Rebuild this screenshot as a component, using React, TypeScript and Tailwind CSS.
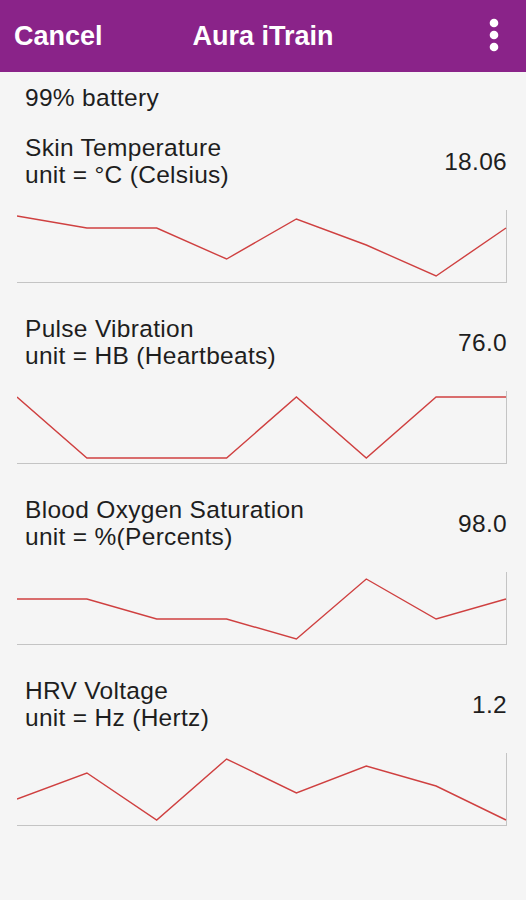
type Metric = {
  title: string;
  unit: string;
  value: string;
  points: number[];
};

const metrics: Metric[] = [
  {
    title: "Skin Temperature",
    unit: "unit = °C (Celsius)",
    value: "18.06",
    points: [6, 18, 18, 49, 9, 35, 66, 18],
  },
  {
    title: "Pulse Vibration",
    unit: "unit = HB (Heartbeats)",
    value: "76.0",
    points: [6, 67, 67, 67, 6, 67, 6, 6],
  },
  {
    title: "Blood Oxygen Saturation",
    unit: "unit = %(Percents)",
    value: "98.0",
    points: [27, 27, 47, 47, 67, 7, 47, 27],
  },
  {
    title: "HRV Voltage",
    unit: "unit = Hz (Hertz)",
    value: "1.2",
    points: [46, 20, 67, 6, 40, 13, 33, 67],
  },
];

const Chart = ({ points }: { points: number[] }) => {
  const step = 489 / (points.length - 1);
  const d = points.map((y, i) => `${(i * step).toFixed(1)},${y}`).join(" ");
  return (
    <svg width="490" height="73" viewBox="0 0 490 73" className="block">
      <line x1="489.5" y1="0" x2="489.5" y2="73" stroke="#c4c4c4" strokeWidth="1" />
      <line x1="0" y1="72.5" x2="490" y2="72.5" stroke="#c4c4c4" strokeWidth="1" />
      <polyline points={d} fill="none" stroke="#cf4040" strokeWidth="1.4" strokeLinejoin="miter" />
    </svg>
  );
};

const MetricRow = ({ metric }: { metric: Metric }) => (
  <div className="flex flex-col">
    <div className="flex items-center justify-between pl-[25px] pr-[19px] text-[24.5px] leading-[27px] tracking-[0.3px] text-[#1e1e1e]">
      <div>
        <p>{metric.title}</p>
        <p>{metric.unit}</p>
      </div>
      <p>{metric.value}</p>
    </div>
    <div className="mt-[22px] mb-[32px] pl-[17px]">
      <Chart points={metric.points} />
    </div>
  </div>
);

// tres puntos del menú
const Dots = () => (
  <svg width="10" height="34" viewBox="0 0 10 34" className="block">
    <circle cx="5" cy="5" r="4.3" fill="white" />
    <circle cx="5" cy="17" r="4.3" fill="white" />
    <circle cx="5" cy="29" r="4.3" fill="white" />
  </svg>
);

export default function App() {
  return (
    <div
      className="min-h-[900px] w-[526px] bg-[#f5f5f5]"
      style={{ fontFamily: '"Liberation Sans", Arial, sans-serif' }}
    >
      {/* barra superior */}
      <div className="relative flex h-[72px] items-center justify-between bg-[#8a2389] pl-[14px] pr-[27px] text-white">
        <span className="text-[27px] font-bold">Cancel</span>
        <span className="absolute left-1/2 -translate-x-1/2 text-[27px] font-bold">Aura iTrain</span>
        <div className="-mt-[2px]">
          <Dots />
        </div>
      </div>

      <p className="pl-[25px] pt-[12px] text-[24.5px] leading-[27px] tracking-[0.3px] text-[#1e1e1e]">99% battery</p>

      <div className="mt-[23px]">
        {metrics.map((m) => (
          <MetricRow key={m.title} metric={m} />
        ))}
      </div>
    </div>
  );
}
